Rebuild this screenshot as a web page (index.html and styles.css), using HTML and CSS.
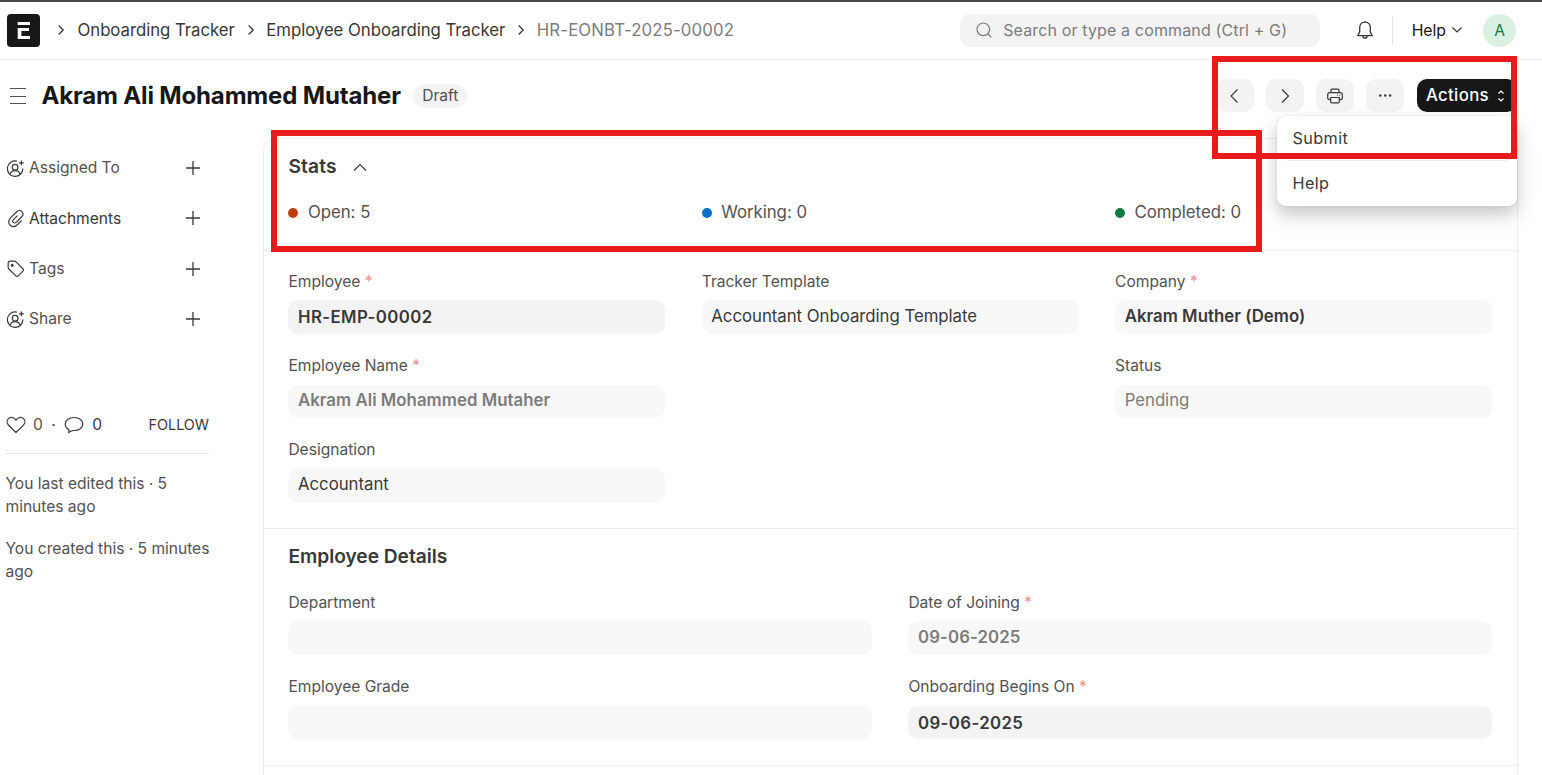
FILE: index.html
```html
<!DOCTYPE html>
<html lang="en">
<head>
<meta charset="utf-8">
<title>HR-EONBT-2025-00002</title>
<link rel="stylesheet" href="styles.css">
</head>
<body>
<header class="navbar">
  <svg class="logo" viewBox="0 0 33 33"><rect width="33" height="33" rx="4" fill="#171717"/><path d="M10.700 8h12.300v3h-12.300zM10.700 14h11.300v3h-7.600v5h8.600v3h-12.300z" fill="#fff"/></svg>
  <nav class="crumbs">
    <svg class="sep" viewBox="0 0 8 12"><path d="M1.700 1.500 6.200 6 1.700 10.500"/></svg>
    <span class="crumb">Onboarding Tracker</span>
    <svg class="sep" viewBox="0 0 8 12"><path d="M1.700 1.500 6.200 6 1.700 10.500"/></svg>
    <span class="crumb">Employee Onboarding Tracker</span>
    <svg class="sep" viewBox="0 0 8 12"><path d="M1.700 1.500 6.200 6 1.700 10.500"/></svg>
    <span class="crumb current">HR-EONBT-2025-00002</span>
  </nav>
  <div class="search">
    <svg class="search-icon" viewBox="0 0 16 16"><circle cx="7.300" cy="7.300" r="6.300"/><path d="m12 12 3.300 3.300"/></svg>
    <span>Search or type a command (Ctrl + G)</span>
  </div>
  <svg class="bell" viewBox="0 0 18 20"><path d="M9 2.200c-3.400 0-5.300 2.500-5.300 5.400v4.200L1.900 15.600h14.200l-1.800-3.800V7.600C14.300 4.700 12.400 2.200 9 2.200zM9 2.200V1M6.800 15.800c.2 1.500 1 2.300 2.200 2.300s2-.8 2.200-2.300"/></svg>
  <div class="vline"></div>
  <div class="help"><span>Help</span><svg class="chev" viewBox="0 0 12 8"><path d="m1.500 1.500 4.500 4.500 4.500-4.500"/></svg></div>
  <div class="avatar">A</div>
</header>

<div class="page-head">
  <svg class="menu-icon" viewBox="0 0 18 18"><path d="M1 1.500h16M1 9.500h16M1 16.500h16"/></svg>
  <h1 class="title">Akram Ali Mohammed Mutaher</h1>
  <span class="pill">Draft</span>
  <div class="head-actions">
    <button class="btn"><svg viewBox="0 0 20 20"><path d="m12.500 3.500-6.500 6.500 6.500 6.500"/></svg></button>
    <button class="btn"><svg viewBox="0 0 20 20"><path d="m7 3.500 6.500 6.500L7 16.500"/></svg></button>
    <button class="btn"><svg viewBox="0 0 20 20"><path d="M6 6.700V4.200q0-1 1-1h6q1 0 1 1v2.500M5.700 13.700H4.500Q2.700 13.700 2.700 12V8.700q0-2 2-2h10.600q2 0 2 2V12q0 1.700-1.800 1.700h-1.200M5.700 11.500h8.600v4.200q0 1.100-1.100 1.100H6.800q-1.100 0-1.100-1.100zM12 9.100h.8M14.400 9.100h.8"/></svg></button>
    <button class="btn"><svg viewBox="0 0 20 20"><g class="dots"><circle cx="5.300" cy="9.500" r="1.200"/><circle cx="10.200" cy="9.500" r="1.200"/><circle cx="15.100" cy="9.500" r="1.200"/></g></svg></button>
    <button class="btn primary"><span>Actions</span><svg class="updown" viewBox="0 0 8 14"><path d="M1.500 4.500 4 2l2.500 2.500M1.500 9.500 4 12l2.500-2.500"/></svg></button>
    <div class="dropdown">
      <div class="item">Submit</div>
      <div class="divider"></div>
      <div class="item">Help</div>
    </div>
  </div>
</div>

<div class="body">
  <aside class="sidebar">
    <ul class="side-list">
      <li><svg class="ic" viewBox="0 0 20 20"><path d="M11.500 2.200A8.200 8.200 0 1 0 17.800 10M16.200 1.500v5M13.700 4h5M4.300 16.300c.6-2.600 2.400-4 5.300-4s4.700 1.400 5.300 4"/><circle cx="9.600" cy="8.600" r="3"/></svg><span>Assigned To</span><svg class="plus" viewBox="0 0 16 16"><path d="M8 1v14M1 8h14"/></svg></li>
      <li class="dark"><svg class="ic" viewBox="0 0 20 20"><path d="m16.500 12-4.300 4.300c-2.400 2.400-5.600 2.800-7.800.8s-2-5.300.3-7.700l6.300-6.200c1.700-1.700 4.200-1.900 5.700-.4s1.400 3.900-.3 5.600L10.800 14c-.9.900-2.300 1-3.100.1s-.8-2.100.1-3L12 6.900"/></svg><span>Attachments</span><svg class="plus" viewBox="0 0 16 16"><path d="M8 1v14M1 8h14"/></svg></li>
      <li><svg class="ic" viewBox="0 0 20 20"><path d="M2.300 4.500v4.300c0 .7.200 1.200.7 1.700l7.300 7.300c.8.800 1.800.8 2.500 0l5-5c.8-.8.800-1.800 0-2.500L10.500 3c-.5-.5-1-.7-1.700-.7H4.500C3.200 2.300 2.300 3.200 2.300 4.500z"/><circle cx="6.500" cy="6.700" r="1"/></svg><span>Tags</span><svg class="plus" viewBox="0 0 16 16"><path d="M8 1v14M1 8h14"/></svg></li>
      <li><svg class="ic" viewBox="0 0 20 20"><path d="M11.500 2.200A8.200 8.200 0 1 0 17.800 10M16.200 1.500v5M13.700 4h5M4.300 16.300c.6-2.600 2.400-4 5.300-4s4.700 1.400 5.300 4"/><circle cx="9.600" cy="8.600" r="3"/></svg><span>Share</span><svg class="plus" viewBox="0 0 16 16"><path d="M8 1v14M1 8h14"/></svg></li>
    </ul>
    <div class="social">
      <svg class="heart" viewBox="0 0 20 18"><path d="M10 16.500 2.600 9.200C.8 7.400.7 4.500 2.400 2.700s4.500-1.700 6.200 0L10 4.200l1.400-1.500c1.700-1.700 4.500-1.800 6.200 0s1.600 4.700-.2 6.500z"/></svg>
      <span class="muted">0</span><span class="dot">·</span>
      <svg class="bubble" viewBox="0 0 20 18"><path d="M10 1.500c5 0 8.800 2.700 8.800 6.500s-3.800 6.500-8.800 6.500c-1.200 0-2 .2-2.700.5L4.800 16.500l.2-2.800C2.500 12.300 1.200 10.400 1.200 8 1.200 4.200 5 1.500 10 1.500z"/></svg>
      <span>0</span>
      <span class="follow">FOLLOW</span>
    </div>
    <p class="log">You last edited this · 5<br>minutes ago</p>
    <p class="log">You created this · 5 minutes<br>ago</p>
  </aside>

  <main class="card">
    <section class="stats">
      <h2>Stats <svg class="collapse" viewBox="0 0 14 10"><path d="m1 8.500 6-6 6 6"/></svg></h2>
      <div class="cols three">
        <div class="stat"><i class="bullet orange"></i>Open: 5</div>
        <div class="stat"><i class="bullet blue"></i>Working: 0</div>
        <div class="stat"><i class="bullet green"></i>Completed: 0</div>
      </div>
    </section>
    <section class="general">
      <div class="cols three">
        <div class="field"><label>Employee <b class="req">*</b></label><div class="input editable">HR-EMP-00002</div></div>
        <div class="field"><label>Tracker Template</label><div class="input">Accountant Onboarding Template</div></div>
        <div class="field"><label>Company <b class="req">*</b></label><div class="input bold">Akram Muther (Demo)</div></div>
        <div class="field"><label>Employee Name <b class="req">*</b></label><div class="input bold gray">Akram Ali Mohammed Mutaher</div></div>
        <div class="field third"><label>Status</label><div class="input gray">Pending</div></div>
        <div class="field first"><label>Designation</label><div class="input">Accountant</div></div>
      </div>
    </section>
    <section class="details">
      <h2>Employee Details</h2>
      <div class="cols two">
        <div class="field"><label>Department</label><div class="input"></div></div>
        <div class="field"><label>Date of Joining <b class="req">*</b></label><div class="input bold gray date">09-06-2025</div></div>
        <div class="field"><label>Employee Grade</label><div class="input"></div></div>
        <div class="field"><label>Onboarding Begins On <b class="req">*</b></label><div class="input editable">09-06-2025</div></div>
      </div>
    </section>
    <section></section>
  </main>
</div>
<div class="mark mark-stats"></div>
<div class="mark mark-actions"></div>
</body>
</html>
```
FILE: styles.css
```css
* { box-sizing: border-box; }
body {
  margin: 0;
  width: 1542px;
  height: 775px;
  overflow: hidden;
  position: relative;
  background: #fff;
  color: #383838;
  font-family: Inter, "Liberation Sans", sans-serif;
  font-size: 15.6px;
  font-weight: 400;
  letter-spacing: -0.02px;
}
svg { fill: none; stroke: #383838; stroke-width: 1.2; flex: none; display: block; }
.logo { stroke: none; width: 33px; height: 33px; }

.navbar {
  height: 60px;
  border-top: 2px solid #4a4648;
  border-bottom: 1px solid #ededed;
  display: flex;
  align-items: center;
  padding: 0 26px 1px 7px;
}
.crumbs { display: flex; align-items: center; padding-left: 17px; font-size: 16.8px; line-height: 24px; letter-spacing: -0.05px; white-space: nowrap; }
.sep { width: 8px; height: 12px; stroke-width: 1.3; }
.crumb { margin: 0 12px 0 11.500px; }
.sep:first-child + .crumb { margin-left: 12.500px; }
.crumb.current { color: #7c7c7c; letter-spacing: 0.13px; }
.search {
  width: 360px;
  height: 33px;
  margin-left: auto;
  border-radius: 10px;
  background: #f3f3f3;
  color: #7c7c7c;
  display: flex;
  align-items: center;
  gap: 11.500px;
  padding-left: 16px;
  font-size: 16px;
  letter-spacing: 0.14px;
}
.search-icon { width: 16px; height: 16px; stroke: #7c7c7c; }
.bell { width: 18px; height: 20px; margin-left: 36.500px; stroke-width: 1.3; }
.vline { width: 1px; height: 29px; background: #e2e2e2; margin: 0 18.500px 0 18px; }
.help { display: flex; align-items: center; gap: 5px; color: #171717; font-size: 15.800px; }
.chev { width: 12px; height: 8px; }
.avatar {
  width: 33px;
  height: 33px;
  margin-left: 20px;
  border-radius: 50%;
  background: #daf0e1;
  color: #137949;
  display: grid;
  place-items: center;
  font-size: 15.6px;
}

.page-head { height: 72px; display: flex; align-items: center; padding: 0 25px 1px 9px; }
.menu-icon { width: 18px; height: 18px; stroke-width: 1.2; stroke: #525252; }
.title { margin: 0 0 0 14.500px; font-size: 24px; font-weight: 700; letter-spacing: -0.16px; color: #171717; white-space: nowrap; }
.pill { margin-left: 12.500px; height: 24px; line-height: 24px; padding: 0 9px; border-radius: 12px; background: #f3f3f3; color: #525252; }
.head-actions { margin-left: auto; display: flex; gap: 12px; position: relative; }
.btn {
  width: 38px;
  height: 33px;
  border: 0;
  padding: 0;
  border-radius: 10px;
  background: #f3f3f3;
  display: flex;
  align-items: center;
  justify-content: center;
  font: inherit;
}
.btn svg { width: 20px; height: 20px; }
.btn .dots { fill: #383838; stroke: none; }
.btn.primary { width: 100px; margin-left: 1px; background: #171717; color: #fff; font-size: 16.800px; font-weight: 500; letter-spacing: 0.32px; gap: 8px; justify-content: flex-start; padding: 0 0 1px 9px; }
.btn .updown { width: 8px; height: 14px; margin-top: 2px; stroke: #fff; }
.dropdown {
  position: absolute;
  z-index: 2;
  right: 0;
  top: 37px;
  width: 240px;
  height: 90px;
  padding: 5px 10px;
  border-radius: 8px;
  background: #fff;
  box-shadow: 0 0 1px rgba(0,0,0,.25), 0 8px 14px rgba(0,0,0,.14), 0 10px 28px rgba(0,0,0,.1);
}
.item { height: 34px; line-height: 35px; padding-left: 5.500px; font-size: 16.200px; letter-spacing: 0.4px; }
.divider { height: 1px; background: #ededed; margin: 5px 0; }

.body { display: flex; padding-top: 6px; }
.sidebar { width: 203.500px; margin-left: 5.500px; flex: none; }
.side-list { list-style: none; margin: 0; padding: 5px 0 0; color: #525252; }
.side-list li { height: 50.300px; display: flex; align-items: center; gap: 4.500px; }
.side-list span { margin-top: -0.500px; }
.side-list .dark { color: #383838; }
.ic { width: 19px; height: 19px; stroke-width: 1.25; }
.plus { width: 16px; height: 16px; margin-left: auto; margin-right: 8px; stroke-width: 1.3; }
.social { margin-top: 60px; height: 50px; border-bottom: 1px solid #e2e2e2; display: flex; align-items: center; padding-bottom: 8px; }
.heart, .bubble { width: 20px; height: 18px; }
.social span { margin-left: 8px; }
.social .muted { color: #525252; margin-left: 7.500px; }
.social .dot { margin: 0 8.500px; }
.social .follow { margin-left: auto; font-size: 14.400px; }
.log { margin: 18px 0 0; color: #525252; line-height: 23.200px; white-space: nowrap; }
.log + .log { margin-top: 18.500px; }

.card {
  margin-left: 54px;
  width: 1255px;
  border: 1px solid #ededed;
  border-bottom: 0;
  border-radius: 12px 12px 0 0;
}
.card section { padding: 0 25px 0 24.400px; border-bottom: 1px solid #ededed; }
.card section:last-child { height: 40px; }
.card h2 { margin: 0; display: flex; align-items: center; gap: 16px; font-size: 19.200px; font-weight: 600; line-height: 26px; letter-spacing: -0.03px; }
.card .stats h2 { letter-spacing: 0.15px; }
.collapse { width: 14px; height: 10px; margin-top: 2px; }
.card .stats { height: 112px; padding-top: 14px; }
.stats .cols { margin-top: 20px; }
.stat { display: flex; align-items: center; gap: 9.500px; height: 26px; color: #525252; font-size: 16.800px; }
.bullet { width: 10px; height: 10px; border-radius: 50%; margin-top: 2px; }
.orange { background: #bd3e0c; }
.blue { background: #0070cc; }
.green { background: #137949; }
.cols { display: grid; column-gap: 36.400px; }
.three { grid-template-columns: repeat(3, 1fr); }
.two { grid-template-columns: repeat(2, 1fr); }
.card .general { height: 278px; padding-top: 20px; }
.card .details { height: 237px; padding-top: 14px; }
.details .cols { margin-top: 23px; }
.field { height: 84.300px; }
.field.third { grid-column: 3; }
.field.first { grid-column: 1; }
.field label { display: block; height: 29.400px; line-height: 21.400px; color: #525252; }
.field.first label { line-height: 20.400px; }
.req { color: #eb9091; font-weight: 400; }
.input { height: 33.600px; border-radius: 10px; background: #f8f8f8; padding: 0 9.600px; line-height: 32px; font-size: 16.800px; letter-spacing: -0.03px; white-space: nowrap; }
.first .input, .input.gray { line-height: 31px; }
.bold { font-weight: 600; letter-spacing: 0.04px; }
.input.date { letter-spacing: 0.12px; line-height: 32px; }
.editable { background: #f3f3f3; font-weight: 600; line-height: 34px; letter-spacing: 0.4px; }
.gray { color: #7c7c7c; }

/* Highlight frames drawn over the page */
.mark { position: absolute; border: 6px solid #e71b1b; z-index: 3; pointer-events: none; }
.mark-stats { left: 271px; top: 130px; width: 991px; height: 122px; }
.mark-actions { left: 1212px; top: 56px; width: 305px; height: 103px; }
```
